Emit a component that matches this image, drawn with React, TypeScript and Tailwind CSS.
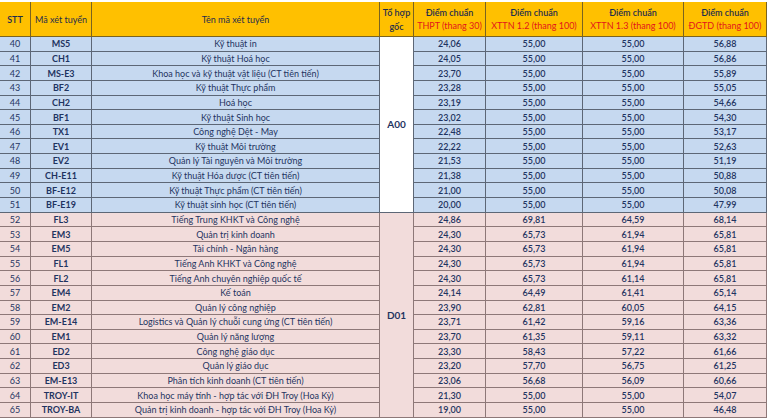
type Row = [string, string, string, string, string, string, string];

const a00: Row[] = [
  ["40", "MS5", "Kỹ thuật in", "24,06", "55,00", "55,00", "56,88"],
  ["41", "CH1", "Kỹ thuật Hoá học", "24,05", "55,00", "55,00", "56,86"],
  ["42", "MS-E3", "Khoa học và kỹ thuật vật liệu (CT tiên tiến)", "23,70", "55,00", "55,00", "55,89"],
  ["43", "BF2", "Kỹ thuật Thực phẩm", "23,28", "55,00", "55,00", "55,05"],
  ["44", "CH2", "Hoá học", "23,19", "55,00", "55,00", "54,66"],
  ["45", "BF1", "Kỹ thuật Sinh học", "23,02", "55,00", "55,00", "54,30"],
  ["46", "TX1", "Công nghệ Dệt - May", "22,48", "55,00", "55,00", "53,17"],
  ["47", "EV1", "Kỹ thuật Môi trường", "22,22", "55,00", "55,00", "52,63"],
  ["48", "EV2", "Quản lý Tài nguyên và Môi trường", "21,53", "55,00", "55,00", "51,19"],
  ["49", "CH-E11", "Kỹ thuật Hóa dược (CT tiên tiến)", "21,38", "55,00", "55,00", "50,88"],
  ["50", "BF-E12", "Kỹ thuật Thực phẩm (CT tiên tiến)", "21,00", "55,00", "55,00", "50,08"],
  ["51", "BF-E19", "Kỹ thuật sinh học (CT tiên tiến)", "20,00", "55,00", "55,00", "47.99"],
];

const d01: Row[] = [
  ["52", "FL3", "Tiếng Trung KHKT và Công nghệ", "24,86", "69,81", "64,59", "68,14"],
  ["53", "EM3", "Quản trị kinh doanh", "24,30", "65,73", "61,94", "65,81"],
  ["54", "EM5", "Tài chính - Ngân hàng", "24,30", "65,73", "61,94", "65,81"],
  ["55", "FL1", "Tiếng Anh KHKT và Công nghệ", "24,30", "65,73", "61,94", "65,81"],
  ["56", "FL2", "Tiếng Anh chuyên nghiệp quốc tế", "24,30", "65,73", "61,14", "65,81"],
  ["57", "EM4", "Kế toán", "24,14", "64,49", "61,41", "65,14"],
  ["58", "EM2", "Quản lý công nghiệp", "23,90", "62,81", "60,05", "64,15"],
  ["59", "EM-E14", "Logistics và Quản lý chuỗi cung ứng (CT tiên tiến)", "23,71", "61,42", "59,16", "63,36"],
  ["60", "EM1", "Quản lý năng lượng", "23,70", "61,35", "59,11", "63,32"],
  ["61", "ED2", "Công nghệ giáo dục", "23,30", "58,43", "57,22", "61,66"],
  ["62", "ED3", "Quản lý giáo dục", "23,20", "57,70", "56,75", "61,25"],
  ["63", "EM-E13", "Phân tích kinh doanh (CT tiên tiến)", "23,06", "56,68", "56,09", "60,66"],
  ["64", "TROY-IT", "Khoa học máy tính - hợp tác với ĐH Troy (Hoa Kỳ)", "21,30", "55,00", "55,00", "54,07"],
  ["65", "TROY-BA", "Quản trị kinh doanh - hợp tác với ĐH Troy (Hoa Kỳ)", "19,00", "55,00", "55,00", "46,48"],
];

const cell = "flex items-center justify-center border-r border-b leading-none whitespace-nowrap";
const head = "flex items-center justify-center border-r border-b border-[#7a6320] bg-[#ffc000] leading-none whitespace-nowrap text-[#1f2d4d]";

function Group({ rows, label, bg, line, groupBg }: { rows: Row[]; label: string; bg: string; line: string; groupBg: string }) {
  return (
    <>
      {rows.map((r, i) => (
        <div key={r[0]} className="contents">
          <div className={`${cell} ${bg} ${line}`}>{r[0]}</div>
          <div className={`${cell} ${bg} ${line} font-bold`}>{r[1]}</div>
          <div className={`${cell} ${bg} ${line}`}>{r[2]}</div>
          {i === 0 && (
            <div
              className={`${cell} ${groupBg} ${line} font-bold text-[10px] ${rows.length === 12 ? "row-span-12" : "row-span-14"}`}
            >
              {label}
            </div>
          )}
          {r.slice(3).map((v, k) => (
            <div key={k} className={`${cell} ${bg} ${line} font-semibold`}>
              {v}
            </div>
          ))}
        </div>
      ))}
    </>
  );
}

function Head({ bottom }: { bottom: string }) {
  return (
    <div className={`${head} flex-col gap-[4px]`}>
      <span className="font-semibold">Điểm chuẩn</span>
      <span className="text-[#e3141b]">{bottom}</span>
    </div>
  );
}

export default function App() {
  return (
    <div className="h-[419px] w-[770px] overflow-hidden bg-white pt-[2px] font-['Lato',_'Noto_Sans',_sans-serif] text-[9px] text-[#1f3461]">
      <div className="grid w-[767px] grid-cols-[31px_61px_288px_34px_72px_97px_101px_83px] grid-rows-[35px_repeat(26,14.65px)]">
        <div className={`${head} font-semibold`}>STT</div>
        <div className={head}>Mã xét tuyển</div>
        <div className={head}>Tên mã xét tuyển</div>
        <div className={`${head} flex-col gap-[5px] font-semibold`}>
          <span>Tổ hợp</span>
          <span>gốc</span>
        </div>
        <Head bottom="THPT (thang 30)" />
        <Head bottom="XTTN 1.2 (thang 100)" />
        <Head bottom="XTTN 1.3 (thang 100)" />
        <Head bottom="ĐGTD (thang 100)" />
        <Group rows={a00} label="A00" bg="bg-[#c6d9f0]" line="border-[#5d6776]" groupBg="bg-white" />
        <Group rows={d01} label="D01" bg="bg-[#f2dcdb]" line="border-[#8e7878]" groupBg="bg-[#f2dcdb]" />
      </div>
    </div>
  );
}
